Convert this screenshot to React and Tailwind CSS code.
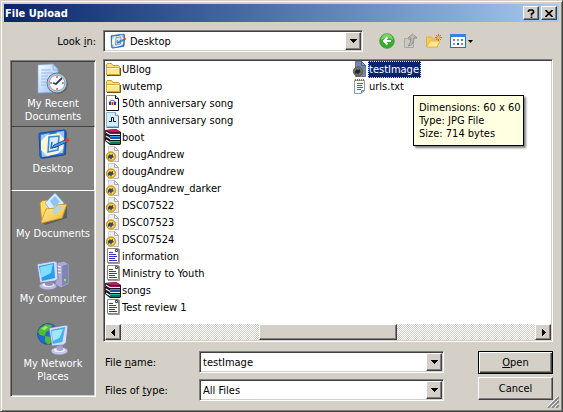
import React from "react";

const raised =
  "border border-t-white border-l-white border-b-[#404040] border-r-[#404040] bg-[#d4d0c8] shadow-[inset_-1px_-1px_#808080]";
const sunken =
  "border border-t-[#808080] border-l-[#808080] border-b-white border-r-white shadow-[inset_1px_1px_#404040,inset_-1px_-1px_#d4d0c8]";

function Arrow({ dir = "down" }) {
  const d = { down: "M0 1h7L3.500 5z", left: "M5 0v7L1 3.500z", right: "M2 0v7L6 3.500z" }[dir];
  return (
    <svg width="7" height="7" viewBox="0 0 7 7" shapeRendering="crispEdges" aria-hidden="true">
      <path d={d} />
    </svg>
  );
}

function DesktopIcon({ size = 32 }) {
  return (
    <svg width={size} height={size} viewBox="0 0 32 32" className="shrink-0" aria-hidden="true">
      <path d="M4 8l24-4 2 1-1 22-23 4-2-1z" fill="#303030" opacity=".45" />
      <path d="M2 6Q2 5 4 5L27 2q2 0 2 2l-1 21q0 2-2 2L5 30q-2 0-2-2z" fill="#2572d8" stroke="#164a9c" />
      <path d="M4 7l9-2-9 10zM19 4l8-1v9zM4 19l9 9-8 1zM27 16l-1 9-9 1z" fill="#9ccbfb" />
      <path d="M10 7l12-2 5 6-1 10-6 5-10 2-6-6V13z" fill="#fff6cf" />
      <path d="M12 9l10-1-1 14-10 2z" fill="#d5ecff" stroke="#3488df" strokeWidth="1.500" />
      <path d="M15 14l-1 6 7-2" fill="none" stroke="#2768b6" strokeWidth="1.500" />
      <path d="M17 17l11-5 2 2-11 5-4 1z" fill="#3ba0ed" stroke="#123e79" strokeWidth=".8" />
      <circle cx="30" cy="12" r="2" fill="#e23b1e" />
    </svg>
  );
}

function RecentIcon() {
  return (
    <svg width="32" height="32" viewBox="0 0 32 32" aria-hidden="true">
      <defs>
        <linearGradient id="paper" x2="1" y2="1">
          <stop stopColor="#fff" /><stop offset="1" stopColor="#8cbcf5" />
        </linearGradient>
      </defs>
      <path d="M1 2l15-1 5 5v23L1 30z" fill="url(#paper)" stroke="#7faee8" strokeWidth=".7" />
      <path d="M16 1v6h5z" fill="#c0dafc" stroke="#6b9ee0" strokeWidth=".6" />
      <path d="M4 7h10M4 10h12M4 13h7M4 16h6M4 19h5M4 22h5" stroke="#92b9ee" />
      <circle cx="21" cy="21" r="10" fill="#333" opacity=".4" />
      <circle cx="20" cy="20" r="10" fill="#b9c3cd" stroke="#657585" />
      <circle cx="20" cy="20" r="7.800" fill="#f5fcff" stroke="#8cabc4" />
      <path d="M20 13v2M20 25v2M13 20h2M25 20h2" stroke="#e65b28" strokeWidth="1.500" />
      <path d="M25 15l-6 6-3-1" fill="none" stroke="#263d59" strokeWidth="1.800" />
    </svg>
  );
}

function DocumentsIcon() {
  return (
    <svg width="32" height="32" viewBox="0 0 32 32" aria-hidden="true">
      <defs>
        <linearGradient id="gold" x2="1" y2="1">
          <stop stopColor="#fff0a0" /><stop offset="1" stopColor="#f0b730" />
        </linearGradient>
      </defs>
      <path d="M6 30l20-5 4-14v14L8 32z" fill="#333" opacity=".45" />
      <path d="M3 10l2-2 5-1 2 3 11 2v12L5 30z" fill="#ffdd69" stroke="#c58e1c" strokeWidth=".8" />
      <path d="M8 10L18 0l9 10-9 14z" fill="#d9edff" stroke="#76aadf" strokeWidth=".8" />
      <path d="M13 8l5-5 5 6-6 5z" fill="#8bc3fa" />
      <path d="M4 29l5-13 9-1 2-3 10-1-5 14-20 5z" fill="url(#gold)" stroke="#c58e1c" strokeWidth=".8" />
      <path d="M15 18l5-5 6 1-8 8z" fill="#a9d3f5" opacity=".85" />
    </svg>
  );
}

function Monitor({ x = 0, y = 0 }) {
  return (
    <g transform={`translate(${x} ${y})`}>
      <ellipse cx="11" cy="26" rx="9" ry="4" fill="#b9b9d8" stroke="#777799" strokeWidth=".7" />
      <ellipse cx="11" cy="25" rx="6" ry="2" fill="#eeeeff" />
      <path d="M8 19h7l1 6q-4 2-8 0z" fill="#8f8fbb" />
      <path d="M0 4l17-3 3 1 1 17-3 2-15 2z" fill="#d9daf2" stroke="#77779f" strokeWidth=".8" />
      <path d="M2 6l15-3 1 15-13 3z" fill="#239ff0" />
      <path d="M3 7l13-3-2 9-10 5z" fill="#84dcff" />
    </g>
  );
}

function ComputerIcon() {
  return (
    <svg width="32" height="32" viewBox="0 0 32 32" aria-hidden="true">
      <path d="M18 5l9-2 5 3v20l-8 4-6-3z" fill="#aaa9cf" stroke="#6e6d99" strokeWidth=".8" />
      <path d="M25 8l6-2v19l-6 3z" fill="#8383b3" />
      <path d="M20 8l4 1M20 11l4 1M20 14l4 1" stroke="#efefff" strokeWidth="1.200" />
      <circle cx="28" cy="22" r="1.200" fill="#8fe94b" />
      <Monitor y={2} />
    </svg>
  );
}

function NetworkIcon() {
  return (
    <svg width="32" height="32" viewBox="0 0 32 32" aria-hidden="true">
      <circle cx="11" cy="11" r="10.500" fill="#1c69cf" stroke="#174789" strokeWidth=".7" />
      <path d="M3 5l6-4 6 1-2 5-4 2-1 4-5-1-2-3zM8 13l6 1 2 4-5 4-3-4z" fill="#50bb35" />
      <path d="M4 6l4-3 3 1-3 3z" fill="#a5ea68" />
      <g transform="translate(12 2) scale(.95 1)">
        <ellipse cx="11" cy="26" rx="9" ry="4" fill="#c9c9e4" stroke="#777799" strokeWidth=".7" />
        <ellipse cx="11" cy="25" rx="6" ry="2" fill="#eeeeff" />
        <path d="M8 18h6l1 7q-4 2-7 0z" fill="#a6a6cc" />
        <path d="M0 3l18-3 2 1-2 17-3 2L3 21z" fill="#d9daf2" stroke="#77779f" strokeWidth=".8" />
        <path d="M2 5l15-3-3 15-10 2z" fill="#3cb2f4" />
        <path d="M3 6l12-2-4 9-7 3z" fill="#a4e6ff" />
      </g>
    </svg>
  );
}

function FileIcon({ kind }) {
  const art = {
    folder: (
      <>
        <path d="M1.500 13V3.500l1-1h4l1.500 2h5.500l1 1V13z" fill="#ffe27a" stroke="#c89b29" />
        <path d="M1.500 6.500h13v7h-13z" fill="#ffe98f" stroke="#d3a833" />
        <path d="M2 7.500h12" stroke="#fffbd5" />
        <path d="M2 14.500h13.500V7" fill="none" stroke="#6d5316" />
      </>
    ),
    audio: (
      <>
        <path d="M1.500.500h9l3 3v12h-12z" fill="#fff" stroke="#888" />
        <path d="M10.500.500v3h3v12h-12" fill="none" stroke="#111" />
        <path d="M4 8q3.500-5.500 7 0" fill="none" stroke="#4a58d8" strokeWidth="1.200" />
        <path d="M4 7h2v3H4zM9 7h2v3H9z" fill="#2735d1" />
        <path d="M6 7h3v3H6z" fill="#ffa53a" /><path d="M7 7h1v3H7z" fill="#dc2514" />
      </>
    ),
    wave: (
      <>
        <path d="M1.500.500h9l3 3v12h-12z" fill="#d4eefe" stroke="#8fb5d3" />
        <path d="M10.500.500v3h3" fill="#fff" stroke="#6999bf" />
        <path d="M2 14h11v1H2z" fill="#86bde2" />
        <path d="M13.500 4v11.500H2" fill="none" stroke="#4f7796" />
        <path d="M4 9.500h2.500v-4h2v4H11" fill="none" stroke="#111" />
      </>
    ),
    archive: (
      <>
        <path d="M0 1l11-1 5 3v12l-1 1H5l-5-4z" fill="#151515" />
        <path d="M1 1l10-1 4 3H5z" fill="#c01d68" /><path d="M5 3.500h10v1.500H5z" fill="#a00f4c" />
        <path d="M5 7h10v3H5z" fill="#1757a9" /><path d="M5 7h10v1H5z" fill="#36a4dd" />
        <path d="M5 12h10v3H5z" fill="#067761" /><path d="M5 12h10v1H5z" fill="#2bb89c" />
        <path d="M1 3l4 2.500M1 7l4 2.500M1 11l4 2.500" stroke="#fff" strokeWidth="1.300" />
        <path d="M0 1v4M0 6v3" stroke="#8d1734" strokeWidth="1.500" />
        <path d="M5 5.500h10M5 10.500h10" stroke="#eee" />
      </>
    ),
    image: (
      <>
        <path d="M3.500.500h6l4 4v11h-10z" fill="#ededed" stroke="#cfcfcf" />
        <path d="M9.500.500v4h4z" fill="#fff" stroke="#aaa" />
        <path d="M13.500 5v10.500H9" fill="none" stroke="#b5b5b5" />
        <circle cx="6" cy="10.500" r="4.700" fill="#e9b02a" stroke="#c08a1c" strokeWidth=".8" />
        <circle cx="6" cy="10.500" r="3.400" fill="#f8d568" />
        <path d="M3 10l2-2 1 1 2-1v2l1 1-2 1-1 2-1-2-2 1z" fill="#3a4a5e" />
      </>
    ),
    imageSelected: (
      <>
        <path d="M3.500.500h6l4 4v11h-10z" fill="#7584ad" stroke="#6677a3" />
        <path d="M9.500.500v4h4z" fill="#91a0c4" stroke="#4e618f" />
        <circle cx="6" cy="10.500" r="4.700" fill="#746a4c" stroke="#5a563f" strokeWidth=".8" />
        <circle cx="6" cy="10.500" r="3.400" fill="#857c5c" />
        <path d="M3 10l2-2 1 1 2-1v2l1 1-2 1-1 2-1-2-2 1z" fill="#142a5c" />
      </>
    ),
    doc: (
      <>
        <path d="M2.500.500h11v14h-11z" fill="#fff" stroke="#888" />
        <path d="M14.500 1v14.500H3" fill="none" stroke="#999" />
        <path d="M10.500 1.500h2v2h-2z" fill="#fff" stroke="#444" />
        <path d="M4 4.500h4M4 6.500h7M4 8.500h8M4 10.500h6M4 12.500h8" stroke="#3333c5" />
      </>
    ),
    text: (
      <>
        <path d="M2.500 2.500h10v10l-3 3h-7z" fill="#f5faff" stroke="#8c9dbd" />
        <path d="M9.500 15v-2.500h3" fill="#b8cef0" stroke="#6d83ac" />
        <path d="M3.500 1v2M5.500 1v2M7.500 1v2M9.500 1v2M11.500 1v2" stroke="#9b682f" />
        <path d="M5 5.500h6M5 7.500h5M5 9.500h6M5 11.500h4" stroke="#555f88" />
      </>
    ),
  }[kind];
  return (
    <svg width="16" height="16" viewBox="0 0 16 16" className="shrink-0" aria-hidden="true">
      {art}
    </svg>
  );
}

const places = [
  ["My Recent Documents", RecentIcon],
  ["Desktop", DesktopIcon],
  ["My Documents", DocumentsIcon],
  ["My Computer", ComputerIcon],
  ["My Network Places", NetworkIcon],
];

const files = [
  ["UBlog", "folder"],
  ["wutemp", "folder"],
  ["50th anniversary song", "audio"],
  ["50th anniversary song", "wave"],
  ["boot", "archive"],
  ["dougAndrew", "image"],
  ["dougAndrew", "image"],
  ["dougAndrew_darker", "image"],
  ["DSC07522", "image"],
  ["DSC07523", "image"],
  ["DSC07524", "image"],
  ["information", "doc"],
  ["Ministry to Youth", "doc"],
  ["songs", "archive"],
  ["Test review 1", "doc"],
  ["testImage", "imageSelected"],
  ["urls.txt", "text"],
];

function DropBox() {
  return (
    <span className={`pointer-events-none absolute inset-y-px right-px flex w-4 items-center justify-center ${raised}`}>
      <Arrow />
    </span>
  );
}

function TitleBar() {
  return (
    <header className="flex h-[18px] items-center gap-0.5 bg-linear-to-r from-[#0a246a] to-[#a6caf0] pr-0.5 pl-px">
      <h1 className="flex-1 font-['DejaVu_Sans_Condensed','DejaVu_Sans',sans-serif] text-[11px] font-bold text-white">
        File Upload
      </h1>
      <button aria-label="Help" className={`flex h-3.5 w-4 items-center justify-center ${raised}`}>
        <svg width="8" height="9" viewBox="0 0 8 9" aria-hidden="true">
          <path d="M1.500 3V2l1-1h3l1 1v1.500L4.500 5v1.500M4.500 7.500V9" fill="none" stroke="#000" strokeWidth="1.700" />
        </svg>
      </button>
      <button aria-label="Close" className={`flex h-3.5 w-4 items-center justify-center ${raised}`}>
        <svg width="8" height="7" viewBox="0 0 8 7" aria-hidden="true">
          <path d="M.500 0l7 7M7.500 0l-7 7" stroke="#000" strokeWidth="1.600" />
        </svg>
      </button>
    </header>
  );
}

function Toolbar() {
  return (
    <div className="flex items-center gap-[7px]">
      <button aria-label="Back">
        <svg width="16" height="16" viewBox="0 0 16 16">
          <circle cx="8" cy="8" r="7.300" fill="#35ac2e" stroke="#3f9c38" strokeWidth=".8" />
          <path d="M2 7a6 6 0 0 1 12 0q-6-4-12 0" fill="#78d568" />
          <path d="M12 8H5M8.500 4.500L5 8l3.500 3.500" fill="none" stroke="#fff" strokeWidth="2" />
        </svg>
      </button>
      <button aria-label="Up one level">
        <svg width="16" height="16" viewBox="0 0 16 16">
          <path d="M2.500 5.500h3l1 1h5v8h-9z" fill="#cbc9c4" stroke="#a9a7a2" />
          <path d="M6 13q3-2 3-8H6l4.500-4L15 5h-3q0 7-6 8z" fill="#bdbbb7" stroke="#868480" strokeWidth=".8" />
        </svg>
      </button>
      <button aria-label="Create new folder">
        <svg width="18" height="16" viewBox="0 0 18 16">
          <path d="M1.500 4h5l1 2h5v8h-11z" fill="#f6ca55" stroke="#e0ae45" />
          <path d="M2 14l3-6h10l-3 6z" fill="#ffe894" stroke="#e5b750" />
          <path d="M13.500 1v7M10 4.500h7M11 2l5 5M16 2l-5 5" stroke="#f15a2b" />
          <circle cx="13.500" cy="4.500" r="1.500" fill="#ffb84a" />
        </svg>
      </button>
      <button aria-label="View menu" className="flex items-center gap-0.5">
        <svg width="16" height="14" viewBox="0 0 16 14" shapeRendering="crispEdges">
          <path d="M.500.500h15v13H.500z" fill="#fff" stroke="#226cc9" />
          <path d="M0 0h16v3H0z" fill="#3484e5" />
          <path d="M3 5h2v2H3zM11 9h2v2h-2z" fill="#b87575" />
          <path d="M7 5h2v2H7zM3 9h2v2H3z" fill="#7896ca" />
          <path d="M11 5h2v2h-2z" fill="#35a047" /><path d="M7 9h2v2H7z" fill="#2952af" />
        </svg>
        <svg width="5" height="3" viewBox="0 0 5 3"><path d="M0 0h5L2.500 3z" /></svg>
      </button>
    </div>
  );
}

function Tooltip() {
  return (
    <div
      role="tooltip"
      className="absolute top-[34px] left-[61px] z-10 w-max border border-black bg-[#ffffe1] py-[5px] pr-0.5 pl-[5px] leading-[13px] text-black shadow-[2px_2px_2px_rgba(0,0,0,0.5)]"
    >
      <p>Dimensions: 60 x 60</p>
      <p>Type: JPG File</p>
      <p>Size: 714 bytes</p>
    </div>
  );
}

export default function App() {
  return (
    <div className="relative flex min-h-screen flex-col border border-t-[#d4d0c8] border-l-[#d4d0c8] border-r-[#404040] border-b-[#404040] bg-[#d4d0c8] p-[3px] font-['DejaVu_Sans_Condensed','DejaVu_Sans',sans-serif] text-[11px] leading-[13px] text-black shadow-[inset_1px_1px_#fff,inset_-1px_-1px_#808080]">
      <TitleBar />
      <div className="flex items-center pt-2">
        <label htmlFor="look" className="w-[99px] pr-[7px] text-right">
          Look <u>i</u>n:
        </label>
        <div className={`relative mr-4 flex h-[22px] w-[260px] items-center bg-white pl-1.5 ${sunken}`}>
          <DesktopIcon size={16} />
          <select id="look" className="h-full flex-1 appearance-none bg-transparent pl-1 outline-none">
            <option>Desktop</option>
          </select>
          <DropBox />
        </div>
        <Toolbar />
      </div>

      <div className="flex flex-1 gap-[7px] px-1.5 pt-[7px] pb-[7px]">
        <nav aria-label="Places" className="mt-px mb-1 w-[86px] border border-t-[#808080] border-l-[#808080] border-r-white border-b-white bg-[#808080] shadow-[inset_1px_1px_#404040,inset_-1px_-1px_#d4d0c8]">
          {places.map(([name, Icon]) => (
            <button
              key={name}
              aria-pressed={name === "Desktop"}
              className={`flex h-[65px] w-full flex-col items-center gap-0.5 border px-1 pt-px text-center text-white ${
                name === "Desktop"
                  ? "border-t-[#404040] border-l-[#404040] border-r-white border-b-white bg-[#848484]"
                  : "border-transparent"
              }`}
            >
              <Icon />
              <span>{name}</span>
            </button>
          ))}
        </nav>

        <main className="flex min-w-0 flex-1 flex-col">
          <div className={`flex flex-1 flex-col bg-white p-px ${sunken}`}>
            <ul className="grid flex-1 grid-flow-col grid-cols-[247px_1fr] grid-rows-[repeat(15,17px)]">
              {files.map(([name, kind], i) => {
                const selected = name === "testImage";
                return (
                  <li key={i} className="relative flex h-[17px] items-start">
                    <FileIcon kind={kind} />
                    <span
                      className={`border pr-px leading-[15px] ${
                        selected ? "border-dotted border-[#f5db95] bg-[#0a246a] text-white" : "border-transparent"
                      }`}
                    >
                      {name}
                    </span>
                    {selected && <Tooltip />}
                  </li>
                );
              })}
            </ul>
            <div className="flex h-4 bg-[repeating-conic-gradient(#fff_0_25%,#d4d0c8_0_50%)] bg-size-[2px_2px]">
              <button aria-label="Scroll left" className={`flex w-4 items-center justify-center ${raised}`}>
                <Arrow dir="left" />
              </button>
              <div className="flex flex-1">
                <div className="w-1/3" />
                <div className={`w-1/3 ${raised}`} />
              </div>
              <button aria-label="Scroll right" className={`flex w-4 items-center justify-center ${raised}`}>
                <Arrow dir="right" />
              </button>
            </div>
          </div>

          <form className="flex justify-between pt-[9px]" onSubmit={(e) => e.preventDefault()}>
            <div className="grid grid-cols-[96px_245px] items-center gap-y-1.5">
              <label htmlFor="name" className="pl-0.5">
                File <u>n</u>ame:
              </label>
              <div className={`flex h-[22px] bg-white p-px ${sunken}`}>
                <input id="name" defaultValue="testImage" className="min-w-0 flex-1 bg-transparent pl-0.5 outline-none" />
                <button type="button" aria-label="Recent names" className={`flex w-4 items-center justify-center ${raised}`}>
                  <Arrow />
                </button>
              </div>
              <label htmlFor="type" className="pl-0.5">
                Files of <u>t</u>ype:
              </label>
              <div className={`relative flex h-[22px] bg-white p-px ${sunken}`}>
                <select id="type" className="flex-1 appearance-none bg-transparent pl-0.5 outline-none">
                  <option>All Files</option>
                </select>
                <DropBox />
              </div>
            </div>
            <div className="flex w-[75px] flex-col gap-[3px]">
              <button type="submit" className="h-[23px] border border-black bg-[#d4d0c8] shadow-[inset_1px_1px_#fff,inset_-1px_-1px_#404040,inset_-2px_-2px_#808080]">
                <u>O</u>pen
              </button>
              <button type="button" className={`h-[23px] ${raised}`}>
                Cancel
              </button>
            </div>
          </form>
        </main>
      </div>

      <svg className="absolute right-[3px] bottom-[3px]" width="12" height="12" viewBox="0 0 12 12" aria-hidden="true">
        <path d="M1 12L12 1M5 12l7-7M9 12l3-3" stroke="#808080" strokeWidth="1.600" />
        <path d="M0 11L11 0M4 11l7-7M8 11l3-3" stroke="#fff" />
      </svg>
    </div>
  );
}
